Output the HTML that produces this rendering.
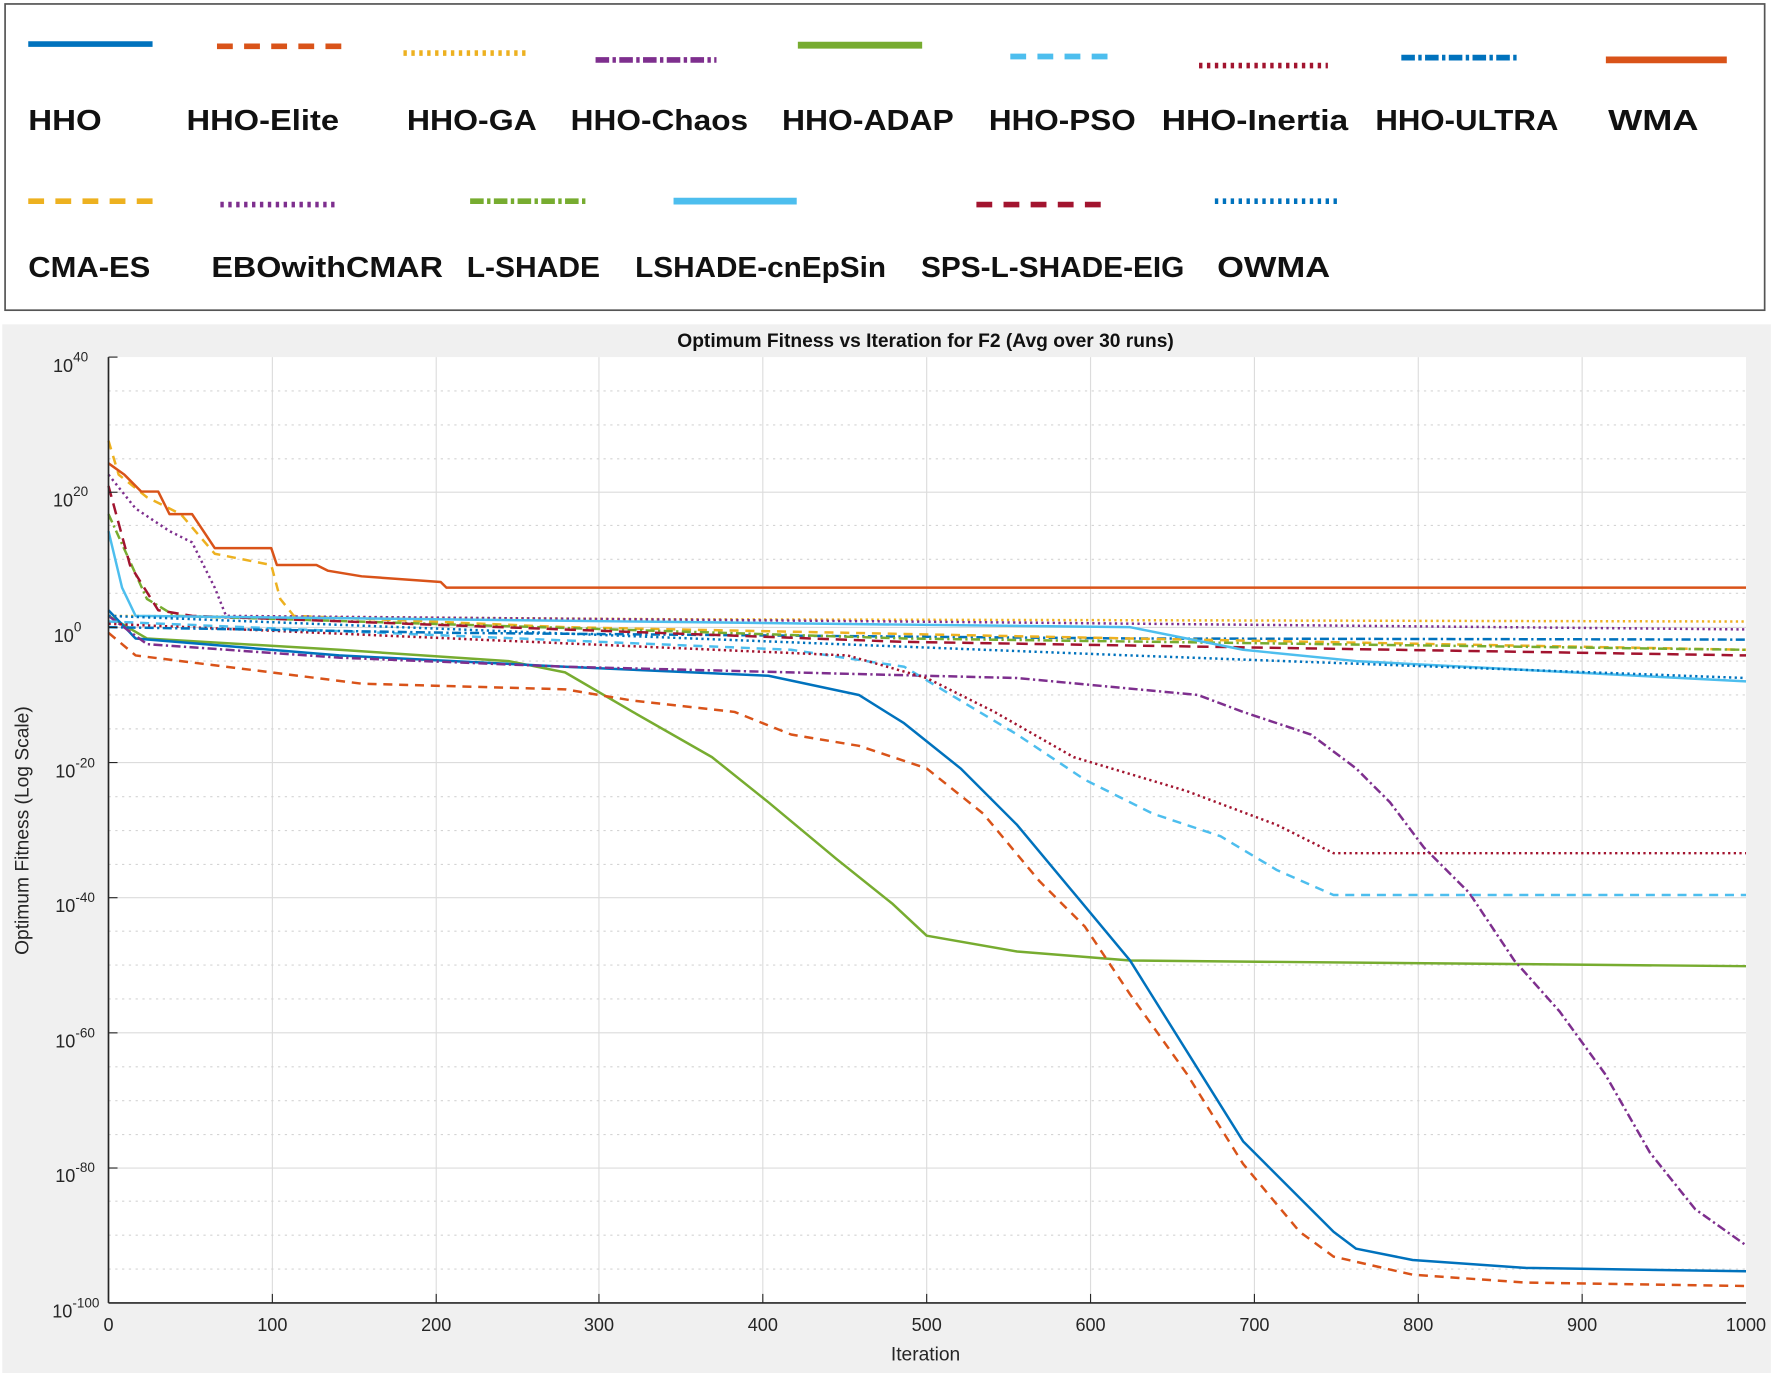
<!DOCTYPE html>
<html><head><meta charset="utf-8"><style>
html,body{margin:0;padding:0;background:#fff;width:1772px;height:1373px;overflow:hidden}
svg{display:block}
.lg{font-family:"Liberation Sans",sans-serif;font-weight:bold;font-size:25px;fill:#111}
.tk{font-family:"Liberation Sans",sans-serif;font-size:16px;fill:#262626}
</style></head><body>
<svg width="1772" height="1373" viewBox="0 0 1568 1215" preserveAspectRatio="none" xmlns="http://www.w3.org/2000/svg">
<rect x="0" y="0" width="1568" height="1215" fill="#fff"/>
<!-- legend box -->
<rect x="4.5" y="3.5" width="1557" height="271" fill="#fff" stroke="#555" stroke-width="1.5"/>
<g stroke-width="5" fill="none">
<line x1="25" y1="39" x2="135" y2="39" stroke="#0072BD"/>
<line x1="192" y1="41" x2="305" y2="41" stroke="#D95319" stroke-dasharray="14,10"/>
<line x1="357" y1="47" x2="468" y2="47" stroke="#EDB120" stroke-dasharray="3,4"/>
<line x1="527" y1="53" x2="634" y2="53" stroke="#7E2F8E" stroke-dasharray="12,3,3,3"/>
<line x1="706" y1="40" x2="816" y2="40" stroke="#77AC30" stroke-width="6"/>
<line x1="894" y1="50" x2="982" y2="50" stroke="#4DBEEE" stroke-dasharray="14,10"/>
<line x1="1061" y1="58" x2="1175" y2="58" stroke="#A2142F" stroke-dasharray="3,4"/>
<line x1="1240" y1="51" x2="1342" y2="51" stroke="#0072BD" stroke-dasharray="12,3,3,3"/>
<line x1="1421" y1="53" x2="1528" y2="53" stroke="#D95319" stroke-width="6"/>
<line x1="25" y1="178" x2="145" y2="178" stroke="#EDB120" stroke-dasharray="14,10"/>
<line x1="195" y1="181" x2="298" y2="181" stroke="#7E2F8E" stroke-dasharray="3,4"/>
<line x1="416" y1="178" x2="518" y2="178" stroke="#77AC30" stroke-dasharray="12,3,3,3"/>
<line x1="596" y1="178" x2="705" y2="178" stroke="#4DBEEE" stroke-width="6"/>
<line x1="864" y1="181" x2="978" y2="181" stroke="#A2142F" stroke-dasharray="14,10"/>
<line x1="1075" y1="178" x2="1187" y2="178" stroke="#0072BD" stroke-dasharray="3,4"/>
</g>
<g class="lg">
<text x="25" y="115" textLength="65" lengthAdjust="spacingAndGlyphs">HHO</text>
<text x="165" y="115" textLength="135" lengthAdjust="spacingAndGlyphs">HHO-Elite</text>
<text x="360" y="115" textLength="115" lengthAdjust="spacingAndGlyphs">HHO-GA</text>
<text x="505" y="115" textLength="157" lengthAdjust="spacingAndGlyphs">HHO-Chaos</text>
<text x="692" y="115" textLength="152" lengthAdjust="spacingAndGlyphs">HHO-ADAP</text>
<text x="875" y="115" textLength="130" lengthAdjust="spacingAndGlyphs">HHO-PSO</text>
<text x="1028" y="115" textLength="165" lengthAdjust="spacingAndGlyphs">HHO-Inertia</text>
<text x="1217" y="115" textLength="162" lengthAdjust="spacingAndGlyphs">HHO-ULTRA</text>
<text x="1423" y="115" textLength="80" lengthAdjust="spacingAndGlyphs">WMA</text>
<text x="25" y="245" textLength="108" lengthAdjust="spacingAndGlyphs">CMA-ES</text>
<text x="187" y="245" textLength="205" lengthAdjust="spacingAndGlyphs">EBOwithCMAR</text>
<text x="413" y="245" textLength="118" lengthAdjust="spacingAndGlyphs">L-SHADE</text>
<text x="562" y="245" textLength="222" lengthAdjust="spacingAndGlyphs">LSHADE-cnEpSin</text>
<text x="815" y="245" textLength="233" lengthAdjust="spacingAndGlyphs">SPS-L-SHADE-EIG</text>
<text x="1077" y="245" textLength="100" lengthAdjust="spacingAndGlyphs">OWMA</text>
</g>
<!-- figure bg -->
<rect x="2" y="287" width="1565" height="928" fill="#f0f0f0"/>
<rect x="96" y="316" width="1449" height="837" fill="#fff"/>
<text x="819" y="307" text-anchor="middle" font-family="Liberation Sans,sans-serif" font-weight="bold" font-size="17" fill="#111">Optimum Fitness vs Iteration for F2 (Avg over 30 runs)</text>
<!-- grid -->
<g stroke="#dcdcdc" stroke-width="1">
<line x1="241" y1="316" x2="241" y2="1153"/><line x1="386" y1="316" x2="386" y2="1153"/>
<line x1="530" y1="316" x2="530" y2="1153"/><line x1="675" y1="316" x2="675" y2="1153"/>
<line x1="820" y1="316" x2="820" y2="1153"/><line x1="965" y1="316" x2="965" y2="1153"/>
<line x1="1110" y1="316" x2="1110" y2="1153"/><line x1="1255" y1="316" x2="1255" y2="1153"/>
<line x1="1400" y1="316" x2="1400" y2="1153"/>
<line x1="96" y1="435.6" x2="1545" y2="435.6"/><line x1="96" y1="555.2" x2="1545" y2="555.2"/>
<line x1="96" y1="674.8" x2="1545" y2="674.8"/><line x1="96" y1="794.4" x2="1545" y2="794.4"/>
<line x1="96" y1="914" x2="1545" y2="914"/><line x1="96" y1="1033.6" x2="1545" y2="1033.6"/>
</g>
<g stroke="#d4d4d4" stroke-width="1" stroke-dasharray="2,4">
<line x1="96" y1="346" x2="1545" y2="346"/><line x1="96" y1="376" x2="1545" y2="376"/><line x1="96" y1="406" x2="1545" y2="406"/>
<line x1="96" y1="465" x2="1545" y2="465"/><line x1="96" y1="495" x2="1545" y2="495"/><line x1="96" y1="525" x2="1545" y2="525"/>
<line x1="96" y1="585" x2="1545" y2="585"/><line x1="96" y1="615" x2="1545" y2="615"/><line x1="96" y1="645" x2="1545" y2="645"/>
<line x1="96" y1="705" x2="1545" y2="705"/><line x1="96" y1="735" x2="1545" y2="735"/><line x1="96" y1="765" x2="1545" y2="765"/>
<line x1="96" y1="824" x2="1545" y2="824"/><line x1="96" y1="854" x2="1545" y2="854"/><line x1="96" y1="884" x2="1545" y2="884"/>
<line x1="96" y1="944" x2="1545" y2="944"/><line x1="96" y1="974" x2="1545" y2="974"/><line x1="96" y1="1004" x2="1545" y2="1004"/>
<line x1="96" y1="1063" x2="1545" y2="1063"/><line x1="96" y1="1093" x2="1545" y2="1093"/><line x1="96" y1="1123" x2="1545" y2="1123"/>
</g>
<!-- curves -->
<g fill="none" stroke-width="2.2" stroke-linejoin="round">
<path stroke="#77AC30" d="M96,545 L130,565 L300,575 L450,585 L500,595 L560,630 L630,670 L680,710 L740,760 L790,800 L820,828 L900,842 L1000,850 L1545,855"/>
<path stroke="#0072BD" d="M96,540 L120,565 L300,580 L500,590 L680,598 L760,615 L800,640 L850,680 L900,730 L950,790 L1000,850 L1050,930 L1100,1010 L1150,1060 L1180,1090 L1200,1105 L1250,1115 L1350,1122 L1545,1125"/>
<path stroke="#D95319" stroke-dasharray="8,6" d="M96,560 L120,580 L200,590 L320,605 L500,610 L560,620 L650,630 L700,650 L760,660 L820,680 L870,720 L920,780 L960,820 L1000,880 L1050,950 L1100,1030 L1150,1090 L1180,1112 L1250,1128 L1350,1135 L1545,1138"/>
<path stroke="#7E2F8E" stroke-dasharray="8,3,2,3" d="M96,545 L130,570 L300,582 L500,590 L700,595 L900,600 L1060,615 L1100,630 L1160,650 L1200,680 L1230,710 L1260,750 L1300,790 L1340,850 L1380,895 L1420,950 L1460,1020 L1500,1070 L1545,1102"/>
<path stroke="#4DBEEE" stroke-dasharray="8,6" d="M96,550 L700,575 L800,590 L850,620 L900,650 L960,690 L1020,720 L1080,740 L1130,770 L1180,792 L1545,792"/>
<path stroke="#A2142F" stroke-dasharray="2,3" d="M96,552 L750,580 L820,600 L880,630 L950,670 L1050,700 L1130,730 L1180,755 L1545,755"/>
<path stroke="#0072BD" stroke-dasharray="8,3,2,3" d="M96,555 L400,560 L1000,565 L1545,566"/>
<path stroke="#EDB120" stroke-dasharray="2,3" d="M96,545 L600,548 L1545,550"/>
<path stroke="#EDB120" stroke-dasharray="8,6" d="M96,390 L105,420 L130,440 L160,455 L190,490 L240,500 L248,530 L260,545 L500,555 L1000,565 L1545,575"/>
<path stroke="#7E2F8E" stroke-dasharray="2,3" d="M96,420 L120,450 L150,470 L170,480 L190,520 L200,545 L800,550 L1545,557"/>
<path stroke="#77AC30" stroke-dasharray="8,3,2,3" d="M96,455 L130,530 L155,545 L800,565 L1545,575"/>
<path stroke="#A2142F" stroke-dasharray="10,6" d="M96,430 L115,500 L140,540 L170,545 L800,568 L1545,580"/>
<path stroke="#4DBEEE" d="M96,470 L108,520 L120,545 L1000,555 L1100,575 L1200,585 L1545,603"/>
<path stroke="#0072BD" stroke-dasharray="2,3" d="M96,545 L1000,580 L1545,600"/>
<path stroke="#D95319" d="M96,410 L110,420 L125,435 L140,435 L150,455 L170,455 L180,470 L190,485 L240,485 L245,500 L280,500 L290,505 L320,510 L390,515 L395,520 L1545,520"/>
</g>
<!-- axes -->
<line x1="96" y1="316" x2="96" y2="1153" stroke="#262626" stroke-width="1.5"/>
<line x1="96" y1="1153" x2="1545" y2="1153" stroke="#262626" stroke-width="1.5"/>
<g stroke="#262626" stroke-width="1">
<line x1="96" y1="316" x2="104" y2="316"/><line x1="96" y1="435.6" x2="104" y2="435.6"/><line x1="96" y1="555.2" x2="104" y2="555.2"/><line x1="96" y1="674.8" x2="104" y2="674.8"/><line x1="96" y1="794.4" x2="104" y2="794.4"/><line x1="96" y1="914" x2="104" y2="914"/><line x1="96" y1="1033.6" x2="104" y2="1033.6"/>
<line x1="241" y1="1153" x2="241" y2="1145"/><line x1="386" y1="1153" x2="386" y2="1145"/><line x1="530" y1="1153" x2="530" y2="1145"/><line x1="675" y1="1153" x2="675" y2="1145"/><line x1="820" y1="1153" x2="820" y2="1145"/><line x1="965" y1="1153" x2="965" y2="1145"/><line x1="1110" y1="1153" x2="1110" y2="1145"/><line x1="1255" y1="1153" x2="1255" y2="1145"/><line x1="1400" y1="1153" x2="1400" y2="1145"/>
</g>
<g class="tk" text-anchor="end">
<text x="78" y="329">10<tspan font-size="12" dy="-9">40</tspan></text>
<text x="78" y="448">10<tspan font-size="12" dy="-9">20</tspan></text>
<text x="72" y="568">10<tspan font-size="12" dy="-9">0</tspan></text>
<text x="84" y="688">10<tspan font-size="12" dy="-9">-20</tspan></text>
<text x="84" y="807">10<tspan font-size="12" dy="-9">-40</tspan></text>
<text x="84" y="927">10<tspan font-size="12" dy="-9">-60</tspan></text>
<text x="84" y="1046">10<tspan font-size="12" dy="-9">-80</tspan></text>
<text x="88" y="1166">10<tspan font-size="12" dy="-9">-100</tspan></text>
</g>
<g class="tk" text-anchor="middle">
<text x="96" y="1178">0</text><text x="241" y="1178">100</text><text x="386" y="1178">200</text><text x="530" y="1178">300</text><text x="675" y="1178">400</text><text x="820" y="1178">500</text><text x="965" y="1178">600</text><text x="1110" y="1178">700</text><text x="1255" y="1178">800</text><text x="1400" y="1178">900</text><text x="1545" y="1178">1000</text>
<text x="819" y="1204" font-size="17">Iteration</text>
<text transform="translate(25,735) rotate(-90)" font-size="17">Optimum Fitness (Log Scale)</text>
</g>
</svg>
</body></html>
